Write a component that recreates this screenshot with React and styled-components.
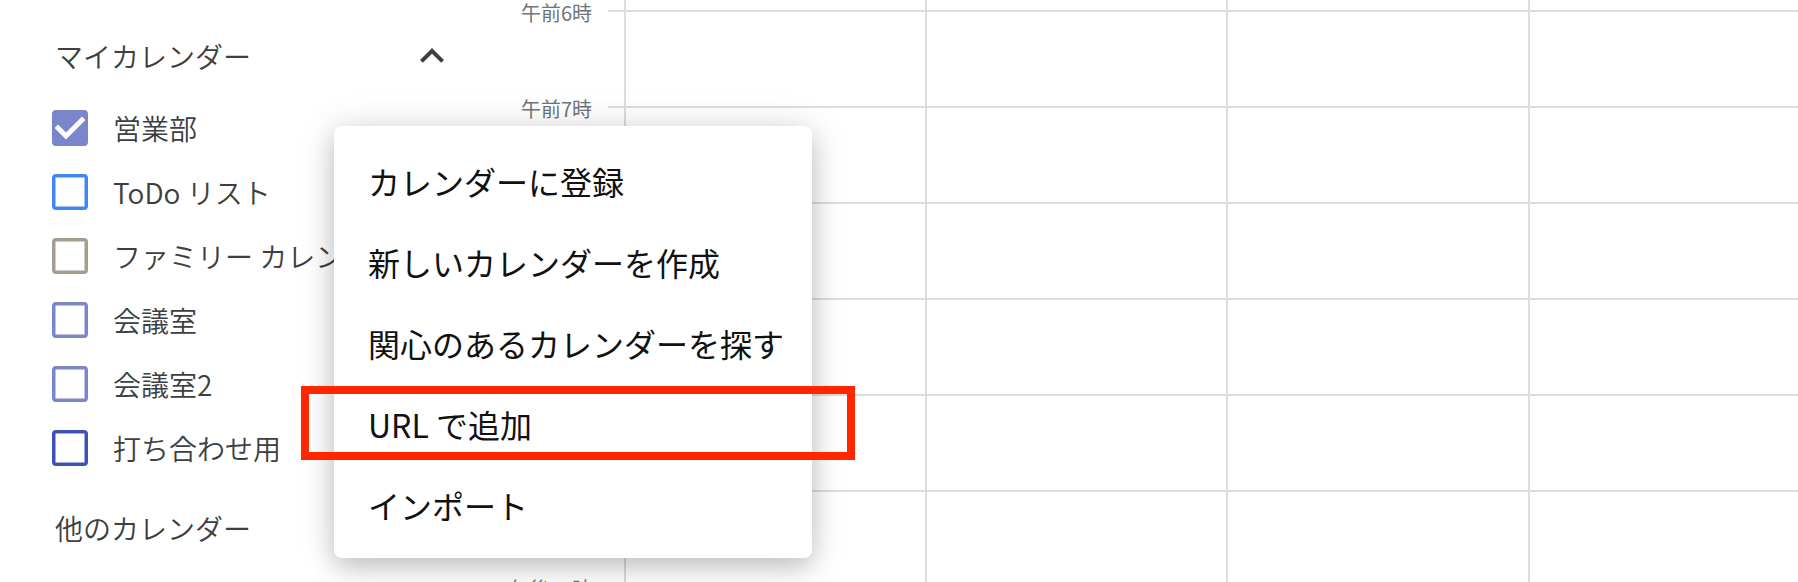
import React from "react";
import styled, { createGlobalStyle } from "styled-components";

const GlobalStyle = createGlobalStyle`
  html, body {
    margin: 0;
    padding: 0;
    background: #ffffff;
  }
  body {
    font-family: "Noto Sans CJK JP", "Noto Sans", sans-serif;
    -webkit-font-smoothing: antialiased;
  }
  * { box-sizing: border-box; }
`;

const Page = styled.div`
  position: relative;
  display: flex;
  width: 1798px;
  height: 582px;
  overflow: hidden;
  background: #fff;
`;

const Sidebar = styled.aside`
  flex: 0 0 460px;
  padding: 20px 4px 0 52px;
  color: #3c4043;
`;

const SectionHeader = styled.div`
  display: flex;
  align-items: center;
  justify-content: space-between;
  height: 72px;
  padding-left: 3px;
  margin-top: ${(p) => (p.$spaced ? "12px" : "0")};
`;

const SectionTitle = styled.span`
  font-size: 28px;
  font-weight: 350;
  line-height: 36px;
  color: #3c4043;
  white-space: nowrap;
`;

const ChevronButton = styled.span`
  display: flex;
  align-items: center;
  justify-content: center;
  width: 48px;
  height: 48px;
  color: #3c4043;
`;

const CalendarList = styled.ul`
  list-style: none;
  margin: 4px 0 0;
  padding: 0;
`;

const CalendarRow = styled.li`
  display: flex;
  align-items: center;
  gap: 25px;
  height: 64px;
`;

const Checkbox = styled.span`
  flex: 0 0 36px;
  width: 36px;
  height: 36px;
  border-radius: 4px;
  border: 3px solid ${(p) => p.$color};
  box-shadow: inset 0 0 0 0.5px ${(p) => p.$color};
  background: ${(p) => (p.$checked ? p.$color : "transparent")};
  display: flex;
  align-items: center;
  justify-content: center;
`;

const CalendarName = styled.span`
  font-size: 28px;
  font-weight: 350;
  line-height: 36px;
  color: #3c4043;
  white-space: nowrap;
`;

const Main = styled.main`
  flex: 1;
  display: flex;
  min-width: 0;
`;

const TimeGutter = styled.div`
  flex: 0 0 164px;
  padding-top: 10px;
`;

const TimeSlot = styled.div`
  display: flex;
  justify-content: flex-end;
  align-items: flex-start;
  height: 96px;
`;

const TimeLabel = styled.span`
  margin-top: -9px;
  margin-right: 16px;
  font-size: 20px;
  font-weight: 400;
  line-height: 24px;
  color: #70757a;
  white-space: nowrap;
`;

const Tick = styled.span`
  width: 16px;
  height: 2px;
  background: #dadce0;
`;

const Days = styled.div`
  flex: 1;
  display: flex;
  overflow: hidden;
`;

const DayColumn = styled.div`
  flex: 0 0 301.2px;
  border-left: 2px solid #dadce0;
  padding-top: 10px;
`;

const HourCell = styled.div`
  height: 96px;
  border-top: 2px solid #dadce0;
`;

const Menu = styled.ul`
  position: absolute;
  left: 334px;
  top: 126px;
  width: 478px;
  margin: 0;
  padding: 14px 0 13px;
  list-style: none;
  background: #fff;
  border-radius: 8px;
  box-shadow: 0 10px 24px rgba(0, 0, 0, 0.18), 0 2px 40px rgba(0, 0, 0, 0.12);
  z-index: 2;
`;

const MenuItem = styled.li`
  display: flex;
  align-items: center;
  height: 81px;
  padding-left: 34px;
  font-size: 32px;
  font-weight: 400;
  color: #111111;
  white-space: nowrap;
`;

const Highlight = styled.div`
  position: absolute;
  left: 301px;
  top: 386px;
  width: 554px;
  height: 74px;
  border: 8px solid #ff2600;
  z-index: 3;
`;

const calendars = [
  { name: "営業部", color: "#7986cb", checked: true },
  { name: "ToDo リスト", color: "#4285f4" },
  { name: "ファミリー カレンダー", color: "#a79b8e" },
  { name: "会議室", color: "#7986cb" },
  { name: "会議室2", color: "#7986cb" },
  { name: "打ち合わせ用", color: "#3f51b5" },
];

const hours = ["午前6時", "午前7時", "午前8時", "午前9時", "午前10時", "午前11時", "午後12時"];

const menuItems = [
  "カレンダーに登録",
  "新しいカレンダーを作成",
  "関心のあるカレンダーを探す",
  "URL で追加",
  "インポート",
];

const CheckMark = () => (
  <svg width="30" height="30" viewBox="0 0 30 30" aria-hidden="true">
    <polyline
      points="3,15 11,23 27,7"
      fill="none"
      stroke="#fff"
      strokeWidth="5"
      strokeLinecap="square"
    />
  </svg>
);

const ChevronUp = () => (
  <svg width="48" height="48" viewBox="0 0 24 24" aria-hidden="true">
    <path d="M12 8l-6 6 1.41 1.41L12 10.83l4.59 4.58L18 14z" fill="currentColor" />
  </svg>
);

export default function App() {
  return (
    <>
      <GlobalStyle />
      <Page>
        <Sidebar>
          <SectionHeader>
            <SectionTitle>マイカレンダー</SectionTitle>
            <ChevronButton>
              <ChevronUp />
            </ChevronButton>
          </SectionHeader>
          <CalendarList>
            {calendars.map((c) => (
              <CalendarRow key={c.name}>
                <Checkbox $color={c.color} $checked={c.checked}>
                  {c.checked && <CheckMark />}
                </Checkbox>
                <CalendarName>{c.name}</CalendarName>
              </CalendarRow>
            ))}
          </CalendarList>
          <SectionHeader $spaced>
            <SectionTitle>他のカレンダー</SectionTitle>
          </SectionHeader>
        </Sidebar>
        <Main>
          <TimeGutter>
            {hours.map((h) => (
              <TimeSlot key={h}>
                <TimeLabel>{h}</TimeLabel>
                <Tick />
              </TimeSlot>
            ))}
          </TimeGutter>
          <Days>
            {[0, 1, 2, 3, 4].map((d) => (
              <DayColumn key={d}>
                {hours.map((h) => (
                  <HourCell key={h} />
                ))}
              </DayColumn>
            ))}
          </Days>
        </Main>
        <Menu>
          {menuItems.map((m) => (
            <MenuItem key={m}>{m}</MenuItem>
          ))}
        </Menu>
        <Highlight />
      </Page>
    </>
  );
}
